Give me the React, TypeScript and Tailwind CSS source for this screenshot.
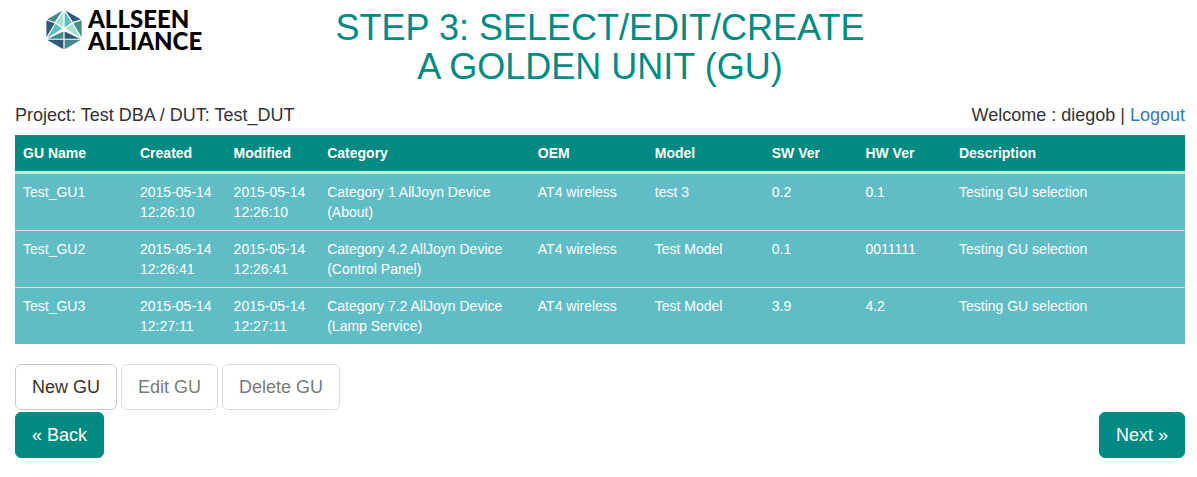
const columns = [
  { label: 'GU Name', width: 'w-[10%]' },
  { label: 'Created', width: 'w-[8%]' },
  { label: 'Modified', width: 'w-[8%]' },
  { label: 'Category', width: 'w-[18%]' },
  { label: 'OEM', width: 'w-[10%]' },
  { label: 'Model', width: 'w-[10%]' },
  { label: 'SW Ver', width: 'w-[8%]' },
  { label: 'HW Ver', width: 'w-[8%]' },
  { label: 'Description', width: 'w-[20%]' },
];

const rows = [
  ['Test_GU1', '2015-05-14 12:26:10', '2015-05-14 12:26:10', 'Category 1 AllJoyn Device (About)', 'AT4 wireless', 'test 3', '0.2', '0.1', 'Testing GU selection'],
  ['Test_GU2', '2015-05-14 12:26:41', '2015-05-14 12:26:41', 'Category 4.2 AllJoyn Device (Control Panel)', 'AT4 wireless', 'Test Model', '0.1', '0011111', 'Testing GU selection'],
  ['Test_GU3', '2015-05-14 12:27:11', '2015-05-14 12:27:11', 'Category 7.2 AllJoyn Device (Lamp Service)', 'AT4 wireless', 'Test Model', '3.9', '4.2', 'Testing GU selection'],
];

function Logo() {
  return (
    <div className="flex items-center gap-[6px] self-start pl-[31px]">
      <svg viewBox="0 0 36 40" className="h-10 w-9 shrink-0" aria-hidden="true">
        <path d="M16.500 0.600 1 9.500 8.800 12z" fill="#438a89" />
        <path d="M17.400 1.500V17.600L9.800 12.600z" fill="#a6e3cb" />
        <path d="M18.600 1.500V17.600L25.800 12.400z" fill="#5fbcc3" />
        <path d="M19.500 0.600 35 9.500 26.800 11.800z" fill="#2c5a7a" />
        <path d="M0.400 10.600V27L8.700 13.300z" fill="#2c5a7a" />
        <path d="M1.400 28 9.600 13.700 16.200 18.500z" fill="#5fbcc3" />
        <path d="M35.600 10.600V27L27.300 13.300z" fill="#438a89" />
        <path d="M34.600 28 26.400 13.700 19.600 18.500z" fill="#a6e3cb" />
        <path d="M17.400 21.400V28.800H2z" fill="#438a89" />
        <path d="M18.600 21.400V28.800H34z" fill="#2c5a7a" />
        <path d="M1 29.800H17.400V39.200z" fill="#2c5a7a" />
        <path d="M35 29.800H18.600V39.200z" fill="#438a89" />
      </svg>
      <div className="font-[Lato,sans-serif] text-2xl leading-[22px] font-black text-black">
        <div>ALLSEEN</div>
        <div>ALLIANCE</div>
      </div>
    </div>
  );
}

const button = 'rounded-md border px-4 py-[10px] text-lg leading-6';

export default function App() {
  return (
    <main className="pr-3 pl-[15px] font-['Liberation_Sans',Arial,sans-serif] text-[#333]">
      <header className="grid grid-cols-4 pt-2">
        <Logo />
        <h1 className="col-span-2 text-center text-4xl leading-[39px] text-[#008a82]">
          STEP 3: SELECT/EDIT/CREATE
          <br />A GOLDEN UNIT (GU)
        </h1>
      </header>

      <div className="mt-4 flex justify-between text-lg leading-[26px]">
        <div>Project: Test DBA / DUT: Test_DUT</div>
        <div>
          Welcome : diegob | <a href="#logout" className="text-[#337ab7]">Logout</a>
        </div>
      </div>

      <table className="mt-[7px] w-full table-fixed border-collapse text-left text-sm leading-5 text-white">
        <thead className="bg-[#008a82]">
          <tr className="border-b-[3px] border-[#ddd]">
            {columns.map((c) => (
              <th key={c.label} scope="col" className={`${c.width} p-2 font-bold`}>{c.label}</th>
            ))}
          </tr>
        </thead>
        <tbody className="bg-[#61bdc5]">
          {rows.map((row) => (
            <tr key={row[0]} className="border-t border-[#ddd] align-top">
              {row.map((cell, i) => (
                <td key={columns[i].label} className="p-2">{cell}</td>
              ))}
            </tr>
          ))}
        </tbody>
      </table>

      <div className="mt-5 flex gap-1">
        <button type="button" className={`${button} border-[#ccc] bg-white`}>New GU</button>
        <button type="button" disabled className={`${button} border-[#ccc] bg-white opacity-65`}>Edit GU</button>
        <button type="button" disabled className={`${button} border-[#ccc] bg-white opacity-65`}>Delete GU</button>
      </div>
      <div className="mt-[2px] mb-5 flex justify-between">
        <button type="button" className={`${button} border-[#008a82] bg-[#008a82] text-white`}>« Back</button>
        <button type="button" className={`${button} border-[#008a82] bg-[#008a82] text-white`}>Next »</button>
      </div>
    </main>
  );
}
